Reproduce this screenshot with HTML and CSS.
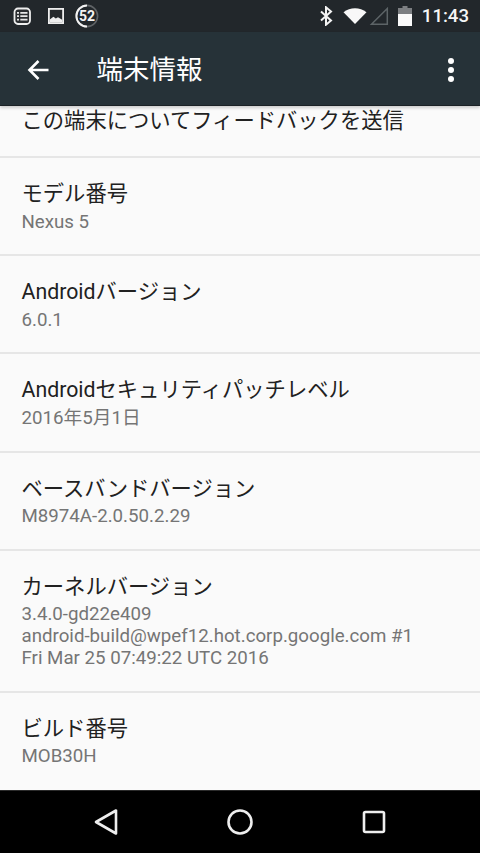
FILE: index.html
```html
<!DOCTYPE html>
<html lang="ja">
<head>
<meta charset="utf-8">
<title>端末情報</title>
<link rel="stylesheet" href="styles.css">
</head>
<body>
<div class="screen">
  <div class="status">
    <div class="status-left">
      <svg class="ic" width="20" height="20" viewBox="0 0 20 20"><rect x="2.500" y="2.500" width="15.500" height="15.500" rx="3.500" fill="#2a2d30" stroke="#eee" stroke-width="1.800"/><path d="M5 6.800h2M8.300 6.800h7.200M5 10.200h2M8.300 10.200h7.200M5 13.600h2M8.300 13.600h7.200" stroke="#e6e6e6" stroke-width="1.700"/></svg>
      <svg class="ic ic-pic" width="20" height="20" viewBox="0 0 20 20"><rect x="2" y="2" width="16" height="16" fill="#eee"/><rect x="3.800" y="3.800" width="12.400" height="12.400" fill="#26292c"/><path d="M3.800 16.200v-2.600l3.600-2.800 2.400 1.600 2.200-1.200 4.200 2.600v2.400z" fill="#eee"/></svg>
      <div class="badge"><svg width="24" height="24" viewBox="0 0 24 24"><circle cx="12" cy="12" r="10.600" fill="none" stroke="#5f6366" stroke-width="1.600"/><path d="M12 1.400A10.600 10.600 0 0 0 12 22.600" fill="none" stroke="#f2f2f2" stroke-width="2"/></svg><span class="badge-num">52</span></div>
    </div>
    <div class="status-right">
      <svg class="bt" width="14" height="20" viewBox="0 0 14 20"><path d="M2 5.500l10 9-5 4.200V1.300l5 4.200-10 9" fill="none" stroke="#f4f4f4" stroke-width="2"/></svg>
      <svg class="wifi" width="24" height="18" viewBox="0 0 24 18"><path d="M0.500 5.200C7 -0.200 17 -0.200 23.500 5.200L12 17z" fill="#f8f8f8"/></svg>
      <svg class="cell" width="20" height="20" viewBox="0 0 20 20"><path d="M18.300 2.500V18.300H2.500z" fill="none" stroke="#5d6467" stroke-width="1.500"/></svg>
      <svg class="batt" width="14" height="20" viewBox="0 0 14 20"><path d="M4.500 0h5v2H14v6H0V2h4.500z" fill="#7c7f82"/><rect x="0" y="8" width="14" height="12" fill="#fafafa"/></svg>
      <span class="clock">11:43</span>
    </div>
  </div>
  <header class="toolbar">
    <svg class="back" width="24" height="24" viewBox="0 0 24 24"><path d="M22.500 12H3.500M12.500 3L3.500 12l9 9" fill="none" stroke="#fff" stroke-width="2.600"/></svg>
    <h1 class="title">端末情報</h1>
    <div class="more"><i></i><i></i><i></i></div>
  </header>
  <main class="list">
    <div class="row row-cut"><div class="label">この端末についてフィードバックを送信</div></div>
    <div class="row"><div class="label">モデル番号</div><div class="sub">Nexus 5</div></div>
    <div class="row"><div class="label">Androidバージョン</div><div class="sub">6.0.1</div></div>
    <div class="row"><div class="label">Androidセキュリティパッチレベル</div><div class="sub">2016年5月1日</div></div>
    <div class="row"><div class="label">ベースバンドバージョン</div><div class="sub">M8974A-2.0.50.2.29</div></div>
    <div class="row row-tall"><div class="label">カーネルバージョン</div><div class="sub">3.4.0-gd22e409<br>android-build@wpef12.hot.corp.google.com #1<br>Fri Mar 25 07:49:22 UTC 2016</div></div>
    <div class="row row-last"><div class="label">ビルド番号</div><div class="sub">MOB30H</div></div>
  </main>
  <nav class="navbar">
    <svg width="26" height="28" viewBox="0 0 26 28"><path d="M23 2.500V25.500L3 14z" fill="none" stroke="#eee" stroke-width="2.600" stroke-linejoin="round"/></svg>
    <svg width="28" height="28" viewBox="0 0 28 28"><circle cx="14" cy="14" r="11.500" fill="none" stroke="#eee" stroke-width="2.600"/></svg>
    <svg width="26" height="26" viewBox="0 0 26 26"><rect x="3" y="3" width="20" height="20" rx="1.500" fill="none" stroke="#eee" stroke-width="2.600"/></svg>
  </nav>
</div>
</body>
</html>
```
FILE: styles.css
```css
* { box-sizing: border-box; }
html, body { margin: 0; padding: 0; }
body { background: #fafafa; font-family: Roboto, "Noto Sans CJK JP", sans-serif; }
.screen { width: 480px; height: 853px; display: flex; flex-direction: column; overflow: hidden; }

.status { height: 32px; flex: none; background: #22272b; display: flex; justify-content: space-between; align-items: center; padding: 0 11px 0 12px; }
.status-left, .status-right { display: flex; align-items: center; }
.ic { display: block; }
.ic-pic { margin-left: 14px; }
.badge { position: relative; width: 24px; height: 24px; margin-left: 9px; }
.badge svg { display: block; }
.badge-num { position: absolute; inset: 0; display: flex; align-items: center; justify-content: center; font-size: 14px; font-weight: 700; color: #f4f4f4; }
.bt { margin-right: 10px; }
.wifi { margin-right: 2px; }
.batt { margin-left: 9px; margin-right: 10px; }
.clock { font-size: 18.600px; font-weight: 500; color: #f6f6f6; }

.toolbar { height: 74px; flex: none; background: #263238; display: flex; align-items: center; padding: 2px 0 0 26px; border-bottom: 1px solid #1b2226; box-shadow: 0 2px 3px rgba(0,0,0,.18); position: relative; z-index: 1; }
.back { flex: none; }
.title { margin: 2px 0 0 46.500px; font-size: 26.500px; font-weight: 400; color: #fff; line-height: 1; flex: 1; }
.more { display: flex; flex-direction: column; gap: 3px; margin-right: 26px; }
.more i { display: block; width: 6px; height: 6px; border-radius: 50%; background: #fff; }

.list { flex: 1; min-height: 0; background: #fafafa; }
.row { height: 98.200px; padding: 22px 21.500px 0; border-bottom: 2px solid #e6e6e6; }
.row-cut { height: 52px; padding-top: 1px; }
.row-tall { height: 142px; }
.row-last { border-bottom: 0; }
.label { font-size: 21.300px; line-height: 28px; color: #212121; white-space: nowrap; }
.sub { font-size: 18.700px; line-height: 22px; margin-top: 2.600px; color: #757575; white-space: nowrap; }

.navbar { height: 63px; flex: none; background: #000; border-top: 1px solid #2b2b2b; display: flex; align-items: center; justify-content: space-between; padding: 0 93px; }
.navbar svg { display: block; }
```
